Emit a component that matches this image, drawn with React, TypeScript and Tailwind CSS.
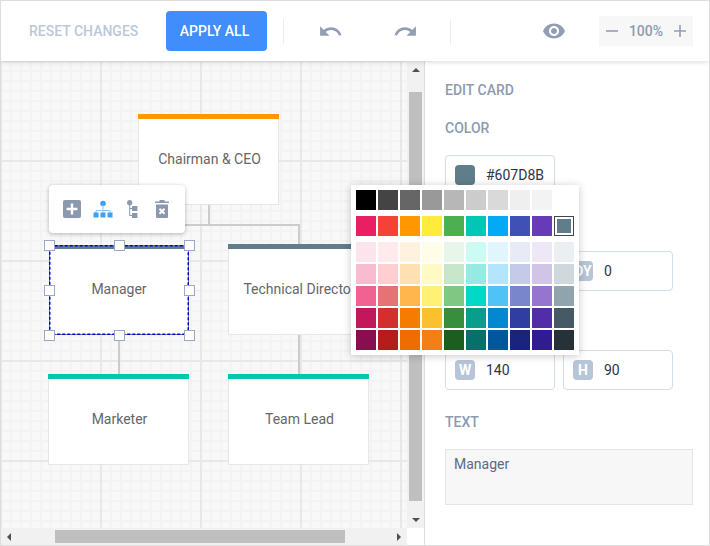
import React from 'react';

const paletteRows = [
  ['#000000', '#444444', '#666666', '#999999', '#b7b7b7', '#cccccc', '#d9d9d9', '#efefef', '#f3f3f3', '#ffffff'],
  ['#e91e63', '#f44336', '#ff9800', '#ffeb3b', '#4caf50', '#00c7b5', '#03a9f4', '#3f51b5', '#673ab7', '#607d8b'],
  ['#fce4ec', '#ffebee', '#fff3e0', '#fffde7', '#e8f5e9', '#ccfbf4', '#e1f5fe', '#e8eaf6', '#ede7f6', '#eceff1'],
  ['#f8bbd0', '#ffcdd2', '#ffe0b2', '#fff9c4', '#c8e6c9', '#93ebe3', '#b3e5fc', '#c5cae9', '#d1c4e9', '#cfd8dc'],
  ['#f06292', '#e57373', '#ffb74d', '#fff176', '#81c784', '#00d9c5', '#4fc3f7', '#7986cb', '#9575cd', '#90a4ae'],
  ['#c2185b', '#d32f2f', '#f57c00', '#fbc02d', '#388e3c', '#0a9c8d', '#0288d1', '#303f9f', '#512da8', '#455a64'],
  ['#880e4f', '#b71c1c', '#ef6c00', '#f57f17', '#1b5e20', '#08706a', '#01579b', '#1a237e', '#311b92', '#263238'],
];

const handles = [
  { x: 48, y: 184 },
  { x: 118, y: 184 },
  { x: 188, y: 184 },
  { x: 48, y: 229 },
  { x: 188, y: 229 },
  { x: 48, y: 274 },
  { x: 118, y: 274 },
  { x: 188, y: 274 },
];

const Card = ({ x, y, w, h, color, text }: { x: number; y: number; w: number; h: number; color: string; text: string }) => (
  <div
    className="absolute flex flex-col bg-white"
    style={{ left: x, top: y, width: w, height: h }}
  >
    <div className="h-[5px] shrink-0" style={{ backgroundColor: color }} />
    <div className="flex flex-1 items-center justify-center border-x border-b border-[#e6e6e6] pb-[5px] pl-[2px] text-sm text-[#666666]">
      {text}
    </div>
  </div>
);

const Field = ({ label, value }: { label: string; value: string }) => (
  <div className="flex h-10 w-[110px] items-center rounded-sm border border-[#d3dce9] bg-white pl-[9px]">
    <span className="flex h-5 w-5 items-center justify-center rounded-sm bg-[#b7c5d8] text-sm font-bold text-white">{label}</span>
    <span className="ml-[11px] text-sm text-[#2c3445]">{value}</span>
  </div>
);

const Heading = ({ children, className }: { children: React.ReactNode; className: string }) => (
  <div className={`h-5 text-sm leading-5 font-medium text-[#8e9ab0] ${className}`}>{children}</div>
);

export default function App() {
  return (
    <div className="relative flex h-[546px] w-[710px] flex-col overflow-hidden border border-[#dddddd] bg-white font-['Roboto',sans-serif]">
      {/* Toolbar */}
      <div className="relative z-10 flex h-[60px] shrink-0 items-center bg-white shadow-[0_1px_5px_rgba(0,0,0,0.16)]">
        <span className="ml-7 w-[137px] text-sm font-medium text-[#bcc8d9]">RESET CHANGES</span>
        <button className="flex h-10 w-[101px] items-center justify-center rounded-sm bg-[#408dfb] pr-1 text-sm font-medium text-white">
          APPLY ALL
        </button>
        <div className="ml-4 h-[25px] w-px bg-[#ececec]" />
        <svg className="ml-[34px] h-[25px] w-[25px] fill-[#929eb4]" viewBox="0 0 24 24">
          <path d="M12.5 8c-2.65 0-5.05.99-6.9 2.6L2 7v9h9l-3.62-3.62c1.39-1.16 3.16-1.88 5.12-1.88 3.54 0 6.55 2.31 7.6 5.5l2.37-.78C21.08 11.03 17.15 8 12.5 8z" />
        </svg>
        <svg className="ml-[50px] h-[25px] w-[25px] fill-[#929eb4]" viewBox="0 0 24 24">
          <path d="M18.4 10.6C16.55 8.99 14.15 8 11.5 8c-4.65 0-8.58 3.03-9.96 7.22L3.9 16c1.05-3.19 4.05-5.5 7.6-5.5 1.95 0 3.73.72 5.12 1.88L13 16h9V7l-3.6 3.6z" />
        </svg>
        <div className="ml-[32px] h-[25px] w-px bg-[#ececec]" />
        <svg className="ml-[91px] h-6 w-6 fill-[#929eb4]" viewBox="0 0 24 24">
          <path d="M12 4.5C7 4.5 2.73 7.61 1 12c1.73 4.39 6 7.5 11 7.5s9.27-3.11 11-7.5c-1.73-4.39-6-7.5-11-7.5zM12 17c-2.76 0-5-2.24-5-5s2.24-5 5-5 5 2.24 5 5-2.24 5-5 5zm0-8c-1.66 0-3 1.34-3 3s1.34 3 3 3 3-1.34 3-3-1.34-3-3-3z" />
        </svg>
        <div className="ml-[33px] flex h-[30px] w-[94px] items-center justify-between bg-[#f7f7f7] px-[7px]">
          <svg className="h-3 w-3 stroke-[#929eb4]" viewBox="0 0 12 12" strokeWidth="1.6"><path d="M0 6h12" /></svg>
          <span className="text-sm font-medium text-[#8e9ab0]">100%</span>
          <svg className="h-3 w-3 stroke-[#929eb4]" viewBox="0 0 12 12" strokeWidth="1.6"><path d="M0 6h12M6 0v12" /></svg>
        </div>
      </div>

      <div className="flex min-h-0 flex-1">
        {/* Diagram area */}
        <div className="flex w-[424px] shrink-0 flex-col border-r border-[#dddddd]">
          <div className="flex min-h-0 flex-1">
            <div className="relative flex-1 overflow-hidden bg-[#f8f8f8] bg-[linear-gradient(to_right,#e8e8e8_2px,transparent_2px),linear-gradient(to_bottom,#e8e8e8_2px,transparent_2px),linear-gradient(to_right,#f3f3f3_2px,transparent_2px),linear-gradient(to_bottom,#f3f3f3_2px,transparent_2px)] bg-[size:100px_100px,100px_100px,10px_10px,10px_10px] bg-[position:-1px_-1px,-1px_-1px,-1px_-1px,-1px_-1px]">
              <svg className="absolute top-0 left-0 h-full w-full" fill="none" stroke="#cccccc" strokeWidth="2">
                <path d="M208 144V164M118 164H298V184M118 274V314M298 274V314" />
              </svg>
              <Card x={137} y={53} w={141} h={91} color="#ff9800" text="Chairman & CEO" />
              <Card x={227} y={183} w={141} h={91} color="#607d8b" text="Technical Director" />
              <Card x={47} y={313} w={141} h={91} color="#00c7b5" text="Marketer" />
              <Card x={227} y={313} w={141} h={91} color="#00c7b5" text="Team Lead" />

              {/* Selected card */}
              <div className="absolute top-[184px] left-[48px] flex h-[90px] w-[140px] flex-col border border-[#607d8b] bg-white">
                <div className="h-[3px] shrink-0 bg-[#607d8b]" />
                <div className="flex flex-1 items-center justify-center pb-[5px] text-sm text-[#666666]">Manager</div>
              </div>
              <svg className="absolute top-[184px] left-[48px] h-[90px] w-[140px]" fill="none">
                <rect x="0.75" y="0.75" width="138.5" height="88.5" stroke="#0000d8" strokeWidth="1.5" strokeDasharray="3 2" />
              </svg>
              {handles.map(h => (
                <div
                  key={`${h.x}-${h.y}`}
                  className="absolute h-[11px] w-[11px] -translate-x-[5px] -translate-y-[5px] border border-[#9aa9c6] bg-white"
                  style={{ left: h.x, top: h.y }}
                />
              ))}

              {/* Card actions */}
              <div className="absolute top-[124px] left-[48px] flex h-12 w-[136px] items-center rounded-sm bg-white shadow-[0_1px_4px_rgba(0,0,0,0.28)]">
                <svg className="ml-[14px] h-[18px] w-[18px]" viewBox="0 0 18 18">
                  <rect width="18" height="18" rx="2" fill="#8c98ae" />
                  <path d="M9 3.6v10.8M3.6 9h10.8" stroke="#fff" strokeWidth="2.4" />
                </svg>
                <svg className="ml-[12px] h-[18px] w-5" viewBox="0 0 20 18">
                  <circle cx="10" cy="3.5" r="2.8" fill="#42a0f0" />
                  <path d="M10 5v5M3 13v-2.5h14V13M10 10v3" fill="none" stroke="#8fc4f2" strokeWidth="1" />
                  <rect x="0.5" y="12.5" width="5" height="5" fill="#42a0f0" />
                  <rect x="7.5" y="12.5" width="5" height="5" fill="#42a0f0" />
                  <rect x="14.5" y="12.5" width="5" height="5" fill="#42a0f0" />
                </svg>
                <svg className="ml-[14px] h-[18px] w-3" viewBox="0 0 12 18">
                  <circle cx="2.7" cy="2.7" r="2.6" fill="#8c98ae" />
                  <path d="M2.7 4v11.5H6M2.7 8.5H6" fill="none" stroke="#8c98ae" strokeWidth="1" />
                  <rect x="5" y="6" width="5.4" height="5" fill="#8c98ae" />
                  <rect x="5" y="13" width="5.4" height="5" fill="#8c98ae" />
                </svg>
                <svg className="ml-[16px] h-[18px] w-[14px]" viewBox="0 0 14 18">
                  <path d="M0 1.5h14v1.5H0zM4.5 0h5v1.5h-5z" fill="#8c98ae" />
                  <path d="M1 4.5h12V17a1 1 0 0 1-1 1H2a1 1 0 0 1-1-1z" fill="#8c98ae" />
                  <path d="M4.5 8.7l5 5M9.5 8.7l-5 5" stroke="#fff" strokeWidth="2" />
                </svg>
              </div>
            </div>

            {/* Vertical scrollbar */}
            <div className="flex w-[17px] shrink-0 flex-col items-center bg-[#f1f1f1]">
              <div className="flex h-[17px] shrink-0 items-center justify-center">
                <div className="h-0 w-0 border-x-[4px] border-b-[4px] border-x-transparent border-b-[#505050]" />
              </div>
              <div className="mt-[14px] h-[409px] w-[13px] bg-[#bfbfbf]" />
              <div className="flex flex-1 items-end justify-center pb-[6px]">
                <div className="h-0 w-0 border-x-[4px] border-t-[4px] border-x-transparent border-t-[#505050]" />
              </div>
            </div>
          </div>

          {/* Horizontal scrollbar */}
          <div className="flex h-[17px] shrink-0">
            <div className="flex flex-1 items-center bg-[#f1f1f1]">
              <div className="ml-[6px] h-0 w-0 border-y-[4px] border-r-[4px] border-y-transparent border-r-[#505050]" />
              <div className="ml-[44px] h-[13px] w-[290px] bg-[#bfbfbf]" />
              <div className="ml-[52px] h-0 w-0 border-y-[4px] border-l-[4px] border-y-transparent border-l-[#505050]" />
            </div>
            <div className="w-[17px] bg-white" />
          </div>
        </div>

        {/* Edit panel */}
        <div className="flex-1 pt-[19px] pl-5">
          <Heading className="mb-[18px]">EDIT CARD</Heading>
          <Heading className="mb-[17px]">COLOR</Heading>
          <div className="flex h-10 w-[110px] items-center rounded-sm border border-[#d3dce9] bg-white pl-[9px]">
            <span className="h-5 w-5 rounded-sm bg-[#607d8b]" />
            <span className="ml-[11px] text-sm text-[#2c3445]">#607D8B</span>
          </div>
          <Heading className="mt-[19px] mb-[17px]">POSITION</Heading>
          <div className="flex gap-2">
            <Field label="DX" value="0" />
            <Field label="DY" value="0" />
          </div>
          <Heading className="mt-[21px] mb-[18px]">SIZE</Heading>
          <div className="flex gap-2">
            <Field label="W" value="140" />
            <Field label="H" value="90" />
          </div>
          <Heading className="mt-[22px] mb-[17px]">TEXT</Heading>
          <textarea
            readOnly
            value="Manager"
            className="block h-14 w-[248px] resize-none border border-[#e5e5e5] bg-[#f7f7f7] px-2 py-1 text-sm text-[#5f6b80] outline-none"
          />
        </div>
      </div>

      {/* Colour palette */}
      <div className="absolute top-[184px] left-[350px] z-20 flex w-[228px] flex-col gap-[2px] bg-white p-[5px] shadow-[0_1px_8px_rgba(0,0,0,0.22)]">
        {paletteRows.map((row, i) => (
          <div key={i} className={`flex gap-[2px] ${i === 1 || i === 2 ? 'mt-1' : ''}`}>
            {row.map((c, j) =>
              i === 1 && j === 9 ? (
                <div key={c} className="h-5 w-5 border border-[#444444] p-[1px]">
                  <div className="h-full w-full border border-white" style={{ backgroundColor: c }} />
                </div>
              ) : (
                <div key={c} className="h-5 w-5" style={{ backgroundColor: c }} />
              ),
            )}
          </div>
        ))}
      </div>
    </div>
  );
}
